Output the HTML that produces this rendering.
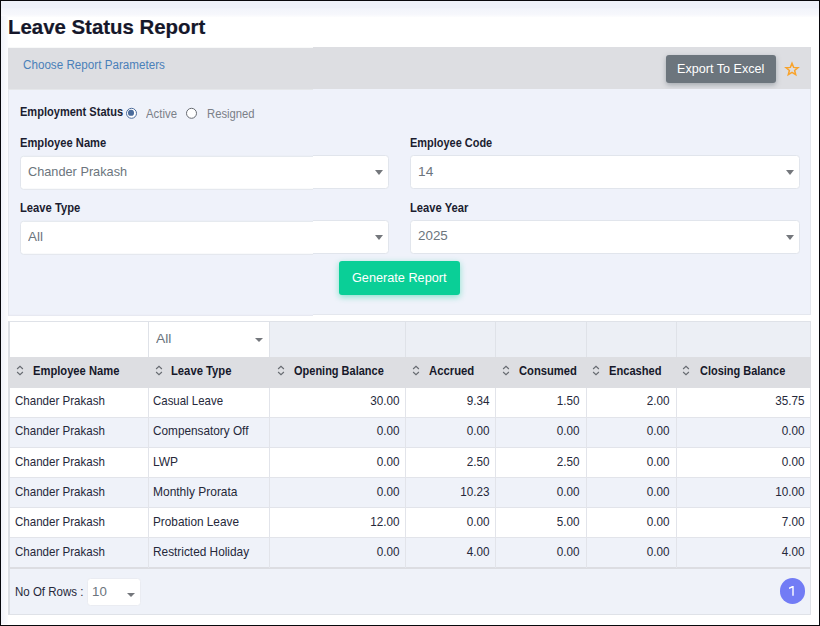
<!DOCTYPE html>
<html>
<head>
<meta charset="utf-8">
<title>Leave Status Report</title>
<style>*{box-sizing:border-box;margin:0;padding:0}
html,body{width:820px;height:626px;overflow:hidden;background:#fff}
body{font-family:"Liberation Sans",sans-serif;font-size:13px;color:#1b1d30;position:relative}
.abs{position:absolute}
.t{position:absolute;white-space:nowrap;line-height:1;transform-origin:0 0;font-weight:normal;font-family:"Liberation Sans",sans-serif}
.frame{position:absolute;left:0;top:0;width:820px;height:626px;border-style:solid;border-color:#08080c;border-width:1px 1px 1px 1px;z-index:50}
.frame:after{content:"";position:absolute;left:-1px;top:-1px;width:820px;height:626px;border-style:solid;border-color:rgba(8,8,12,.45);border-width:0 2px 2px 0}
.topband{position:absolute;left:1px;top:1px;width:818px;height:16px;background:linear-gradient(#eef1f9 0,#eef1f9 42%,#f3f5fb 50%,#f6f7fc 82%,#fdfdfe 100%)}
.leftband{position:absolute;left:1px;top:16px;width:7px;height:608px;background:linear-gradient(90deg,#f1f3fa,#fcfcfe)}
.up{position:absolute;left:0;width:820px;height:318px;overflow:hidden}
#upR{top:0;clip-path:inset(0 0 0 313px)}
#upL{clip-path:inset(0 507px 0 0)}
.bar{position:absolute;left:8.4px;top:47.2px;width:802.3px;height:41.6px;background:#dddee2}
.btn-ex{position:absolute;left:666.1px;top:54.8px;width:110.4px;height:28.3px;border-radius:3px;background:#6c757d;box-shadow:0 2px 5px rgba(108,117,125,.5)}
.panel{position:absolute;left:8.4px;top:88.8px;width:802.3px;height:226px;background:#eff2fa;border:1px solid #e4e7ee;border-top:none}
.radio{position:absolute;width:11.2px;height:11.2px;border-radius:50%;border:1.1px solid #676b72;background:#fff}
.radio.on{border-color:#4c6c9c}
.radio.on:after{content:"";position:absolute;left:1.6px;top:1.6px;width:5.8px;height:5.8px;border-radius:50%;background:#4a6b9b}
.sel{position:absolute;height:34px;background:#fff;border:1px solid #e1e5ec;border-radius:3.5px}
.sel:after{content:"";position:absolute;right:16px;top:13.6px;margin-right:-11.2px;border-left:4.9px solid transparent;border-right:4.9px solid transparent;border-top:5.1px solid #74777c}
.sel.sm:after{display:none}
.arrow{position:absolute;width:0;height:0;border-left:4.5px solid transparent;border-right:4.5px solid transparent;border-top:4.6px solid #74777c}
.btn-gen{position:absolute;left:339px;top:261.3px;width:121.1px;height:33.6px;border-radius:3px;background:#0acf97;box-shadow:0 2px 6px rgba(10,207,151,.45)}
.tbl{position:absolute;left:8px;top:321px;width:803px;height:293.6px;background:#eff2f9;border:1px solid #dfe2e8;border-left:2px solid #dcdfe5}
.pg{position:absolute;left:779.7px;top:578.2px;width:25.3px;height:25.5px;border-radius:50%;background:#727cf5}

#upL{top:0;transform:translateY(0.8px)}
</style>
</head>
<body>
<div class="topband"></div>
<div class="leftband"></div>
<div class="up" id="upR">
<span class="t" style="left:7.97px;top:16.00px;font-size:20.5px;transform:scaleX(0.9948);color:#15172a;font-weight:bold;-webkit-text-stroke:0.2px #15172a;">Leave Status Report</span>
<div class="bar"></div>
<span class="t" style="left:22.85px;top:58.00px;font-size:12.5px;transform:scaleX(0.9326);color:#4a80b9;">Choose Report Parameters</span>
<div class="btn-ex"></div>
<span class="t" style="left:677.45px;top:62.00px;font-size:13.7px;transform:scaleX(0.9206);color:#fff;">Export To Excel</span>
<svg class="abs" style="left:782.9px;top:60.2px" width="18" height="18" viewBox="0 0 18 18"><path d="M9.00 3.30 L10.62 7.38 L14.99 7.65 L11.62 10.45 L12.70 14.70 L9.00 12.35 L5.30 14.70 L6.38 10.45 L3.01 7.65 L7.38 7.38 Z" fill="none" stroke="#f9a32a" stroke-width="1.5" stroke-linejoin="miter"/></svg>
<div class="panel"></div>
<span class="t" style="left:20.16px;top:105.00px;font-size:12.4px;transform:scaleX(0.8916);color:#1b1d30;font-weight:bold;">Employment Status</span>
<div class="radio on" style="left:125.8px;top:106.8px"></div>
<span class="t" style="left:145.97px;top:108.00px;font-size:11.9px;transform:scaleX(0.9562);color:#7b8088;">Active</span>
<div class="radio" style="left:186px;top:107px"></div>
<span class="t" style="left:206.79px;top:108.00px;font-size:11.9px;transform:scaleX(0.9482);color:#7b8088;">Resigned</span>
<span class="t" style="left:20.14px;top:136.00px;font-size:12.4px;transform:scaleX(0.9006);color:#1b1d30;font-weight:bold;">Employee Name</span>
<span class="t" style="left:410.22px;top:137.00px;font-size:12.4px;transform:scaleX(0.8839);color:#1b1d30;font-weight:bold;">Employee Code</span>
<span class="t" style="left:20.10px;top:201.00px;font-size:12.4px;transform:scaleX(0.9053);color:#1b1d30;font-weight:bold;">Leave Type</span>
<span class="t" style="left:410.14px;top:202.00px;font-size:12.4px;transform:scaleX(0.9034);color:#1b1d30;font-weight:bold;">Leave Year</span>
<div class="sel" style="left:20px;top:155px;width:368.5px"></div>
<div class="sel" style="left:410.3px;top:155px;width:389.5px"></div>
<div class="sel" style="left:20px;top:220px;width:368.5px"></div>
<div class="sel" style="left:410.3px;top:220px;width:389.5px"></div>
<span class="t" style="left:28.02px;top:164.00px;font-size:13.6px;transform:scaleX(0.9368);color:#6c757d;">Chander Prakash</span>
<span class="t" style="left:418.34px;top:165.00px;font-size:13.6px;transform:scaleX(1.0092);color:#6c757d;">14</span>
<span class="t" style="left:28.07px;top:229.00px;font-size:13.6px;transform:scaleX(0.9899);color:#6c757d;">All</span>
<span class="t" style="left:418.11px;top:229.00px;font-size:13.6px;transform:scaleX(0.9851);color:#6c757d;">2025</span>
<div class="btn-gen"></div>
<span class="t" style="left:351.74px;top:271.00px;font-size:13.7px;transform:scaleX(0.9273);color:#fff;">Generate Report</span>
</div>
<div class="up" id="upL">
<span class="t" style="left:7.97px;top:16.00px;font-size:20.5px;transform:scaleX(0.9948);color:#15172a;font-weight:bold;-webkit-text-stroke:0.2px #15172a;">Leave Status Report</span>
<div class="bar"></div>
<span class="t" style="left:22.85px;top:58.00px;font-size:12.5px;transform:scaleX(0.9326);color:#4a80b9;">Choose Report Parameters</span>
<div class="btn-ex"></div>
<span class="t" style="left:677.45px;top:62.00px;font-size:13.7px;transform:scaleX(0.9206);color:#fff;">Export To Excel</span>
<svg class="abs" style="left:782.9px;top:60.2px" width="18" height="18" viewBox="0 0 18 18"><path d="M9.00 3.30 L10.62 7.38 L14.99 7.65 L11.62 10.45 L12.70 14.70 L9.00 12.35 L5.30 14.70 L6.38 10.45 L3.01 7.65 L7.38 7.38 Z" fill="none" stroke="#f9a32a" stroke-width="1.5" stroke-linejoin="miter"/></svg>
<div class="panel"></div>
<span class="t" style="left:20.16px;top:105.00px;font-size:12.4px;transform:scaleX(0.8916);color:#1b1d30;font-weight:bold;">Employment Status</span>
<div class="radio on" style="left:125.8px;top:106.8px"></div>
<span class="t" style="left:145.97px;top:108.00px;font-size:11.9px;transform:scaleX(0.9562);color:#7b8088;">Active</span>
<div class="radio" style="left:186px;top:107px"></div>
<span class="t" style="left:206.79px;top:108.00px;font-size:11.9px;transform:scaleX(0.9482);color:#7b8088;">Resigned</span>
<span class="t" style="left:20.14px;top:136.00px;font-size:12.4px;transform:scaleX(0.9006);color:#1b1d30;font-weight:bold;">Employee Name</span>
<span class="t" style="left:410.22px;top:137.00px;font-size:12.4px;transform:scaleX(0.8839);color:#1b1d30;font-weight:bold;">Employee Code</span>
<span class="t" style="left:20.10px;top:201.00px;font-size:12.4px;transform:scaleX(0.9053);color:#1b1d30;font-weight:bold;">Leave Type</span>
<span class="t" style="left:410.14px;top:202.00px;font-size:12.4px;transform:scaleX(0.9034);color:#1b1d30;font-weight:bold;">Leave Year</span>
<div class="sel" style="left:20px;top:155px;width:368.5px"></div>
<div class="sel" style="left:410.3px;top:155px;width:389.5px"></div>
<div class="sel" style="left:20px;top:220px;width:368.5px"></div>
<div class="sel" style="left:410.3px;top:220px;width:389.5px"></div>
<span class="t" style="left:28.02px;top:164.00px;font-size:13.6px;transform:scaleX(0.9368);color:#6c757d;">Chander Prakash</span>
<span class="t" style="left:418.34px;top:165.00px;font-size:13.6px;transform:scaleX(1.0092);color:#6c757d;">14</span>
<span class="t" style="left:28.07px;top:229.00px;font-size:13.6px;transform:scaleX(0.9899);color:#6c757d;">All</span>
<span class="t" style="left:418.11px;top:229.00px;font-size:13.6px;transform:scaleX(0.9851);color:#6c757d;">2025</span>
<div class="btn-gen"></div>
<span class="t" style="left:351.74px;top:271.00px;font-size:13.7px;transform:scaleX(0.9273);color:#fff;">Generate Report</span>
</div>
<div class="tbl"></div>
<div class="abs" style="left:10px;top:322px;width:259px;height:35px;background:#fff"></div>
<div class="abs" style="left:269px;top:322px;width:541px;height:35px;background:#eceff5"></div>
<div class="abs" style="left:8px;top:357px;width:803px;height:30.5px;background:#dddee2"></div>
<div class="abs" style="left:10px;top:387.5px;width:800px;height:30px;background:#fff"></div>
<div class="abs" style="left:10px;top:417px;width:800px;height:1px;background:#e2e4ea"></div>
<div class="abs" style="left:10px;top:417.5px;width:800px;height:30px;background:#eff2f9"></div>
<div class="abs" style="left:10px;top:447px;width:800px;height:1px;background:#e2e4ea"></div>
<div class="abs" style="left:10px;top:447.5px;width:800px;height:30px;background:#fff"></div>
<div class="abs" style="left:10px;top:477px;width:800px;height:1px;background:#e2e4ea"></div>
<div class="abs" style="left:10px;top:477.5px;width:800px;height:30px;background:#eff2f9"></div>
<div class="abs" style="left:10px;top:507px;width:800px;height:1px;background:#e2e4ea"></div>
<div class="abs" style="left:10px;top:507.5px;width:800px;height:30px;background:#fff"></div>
<div class="abs" style="left:10px;top:537px;width:800px;height:1px;background:#e2e4ea"></div>
<div class="abs" style="left:10px;top:537.5px;width:800px;height:30px;background:#eff2f9"></div>
<div class="abs" style="left:10px;top:567px;width:800px;height:1.6px;background:#dcdde2"></div>
<div class="abs" style="left:148px;top:322px;width:1px;height:35px;background:#dfe2e8"></div>
<div class="abs" style="left:148px;top:387.5px;width:1px;height:180px;background:#e2e4ea"></div>
<div class="abs" style="left:269px;top:322px;width:1px;height:35px;background:#dfe2e8"></div>
<div class="abs" style="left:269px;top:387.5px;width:1px;height:180px;background:#e2e4ea"></div>
<div class="abs" style="left:405px;top:322px;width:1px;height:35px;background:#dfe2e8"></div>
<div class="abs" style="left:405px;top:387.5px;width:1px;height:180px;background:#e2e4ea"></div>
<div class="abs" style="left:495px;top:322px;width:1px;height:35px;background:#dfe2e8"></div>
<div class="abs" style="left:495px;top:387.5px;width:1px;height:180px;background:#e2e4ea"></div>
<div class="abs" style="left:586px;top:322px;width:1px;height:35px;background:#dfe2e8"></div>
<div class="abs" style="left:586px;top:387.5px;width:1px;height:180px;background:#e2e4ea"></div>
<div class="abs" style="left:676px;top:322px;width:1px;height:35px;background:#dfe2e8"></div>
<div class="abs" style="left:676px;top:387.5px;width:1px;height:180px;background:#e2e4ea"></div>
<svg class="abs" style="left:15.65px;top:365.3px" width="8" height="11" viewBox="0 0 8 11"><path d="M1.1 4 L4 1.3 L6.9 4 M1.1 7 L4 9.7 L6.9 7" fill="none" stroke="#666a70" stroke-width="1.1"/></svg>
<span class="t" style="left:33.07px;top:365.00px;font-size:12px;transform:scaleX(0.9315);color:#16182a;font-weight:bold;">Employee Name</span>
<svg class="abs" style="left:154.95px;top:365.3px" width="8" height="11" viewBox="0 0 8 11"><path d="M1.1 4 L4 1.3 L6.9 4 M1.1 7 L4 9.7 L6.9 7" fill="none" stroke="#666a70" stroke-width="1.1"/></svg>
<span class="t" style="left:171.15px;top:365.00px;font-size:12px;transform:scaleX(0.9371);color:#16182a;font-weight:bold;">Leave Type</span>
<svg class="abs" style="left:276.75px;top:365.3px" width="8" height="11" viewBox="0 0 8 11"><path d="M1.1 4 L4 1.3 L6.9 4 M1.1 7 L4 9.7 L6.9 7" fill="none" stroke="#666a70" stroke-width="1.1"/></svg>
<span class="t" style="left:293.81px;top:365.00px;font-size:12px;transform:scaleX(0.9159);color:#16182a;font-weight:bold;">Opening Balance</span>
<svg class="abs" style="left:411.85px;top:365.3px" width="8" height="11" viewBox="0 0 8 11"><path d="M1.1 4 L4 1.3 L6.9 4 M1.1 7 L4 9.7 L6.9 7" fill="none" stroke="#666a70" stroke-width="1.1"/></svg>
<span class="t" style="left:428.50px;top:365.00px;font-size:12px;transform:scaleX(0.9422);color:#16182a;font-weight:bold;">Accrued</span>
<svg class="abs" style="left:501.95px;top:365.3px" width="8" height="11" viewBox="0 0 8 11"><path d="M1.1 4 L4 1.3 L6.9 4 M1.1 7 L4 9.7 L6.9 7" fill="none" stroke="#666a70" stroke-width="1.1"/></svg>
<span class="t" style="left:518.95px;top:365.00px;font-size:12px;transform:scaleX(0.9334);color:#16182a;font-weight:bold;">Consumed</span>
<svg class="abs" style="left:592.15px;top:365.3px" width="8" height="11" viewBox="0 0 8 11"><path d="M1.1 4 L4 1.3 L6.9 4 M1.1 7 L4 9.7 L6.9 7" fill="none" stroke="#666a70" stroke-width="1.1"/></svg>
<span class="t" style="left:609.19px;top:365.00px;font-size:12px;transform:scaleX(0.9279);color:#16182a;font-weight:bold;">Encashed</span>
<svg class="abs" style="left:681.95px;top:365.3px" width="8" height="11" viewBox="0 0 8 11"><path d="M1.1 4 L4 1.3 L6.9 4 M1.1 7 L4 9.7 L6.9 7" fill="none" stroke="#666a70" stroke-width="1.1"/></svg>
<span class="t" style="left:699.91px;top:365.00px;font-size:12px;transform:scaleX(0.9130);color:#16182a;font-weight:bold;">Closing Balance</span>
<span class="t" style="left:15.37px;top:395.00px;font-size:12.6px;transform:scaleX(0.9173);color:#25283a;">Chander Prakash</span>
<span class="t" style="left:153.40px;top:395.00px;font-size:12.6px;transform:scaleX(0.9094);color:#25283a;">Casual Leave</span>
<span class="t" style="right:420.70px;top:395.00px;font-size:12.6px;transform-origin:100% 0;transform:scaleX(0.93);color:#25283a">30.00</span>
<span class="t" style="right:330.60px;top:395.00px;font-size:12.6px;transform-origin:100% 0;transform:scaleX(0.93);color:#25283a">9.34</span>
<span class="t" style="right:240.80px;top:395.00px;font-size:12.6px;transform-origin:100% 0;transform:scaleX(0.93);color:#25283a">1.50</span>
<span class="t" style="right:150.50px;top:395.00px;font-size:12.6px;transform-origin:100% 0;transform:scaleX(0.93);color:#25283a">2.00</span>
<span class="t" style="right:15.00px;top:395.00px;font-size:12.6px;transform-origin:100% 0;transform:scaleX(0.93);color:#25283a">35.75</span>
<span class="t" style="left:15.37px;top:425.00px;font-size:12.6px;transform:scaleX(0.9173);color:#25283a;">Chander Prakash</span>
<span class="t" style="left:153.40px;top:425.00px;font-size:12.6px;transform:scaleX(0.9357);color:#25283a;">Compensatory Off</span>
<span class="t" style="right:420.70px;top:425.00px;font-size:12.6px;transform-origin:100% 0;transform:scaleX(0.93);color:#25283a">0.00</span>
<span class="t" style="right:330.60px;top:425.00px;font-size:12.6px;transform-origin:100% 0;transform:scaleX(0.93);color:#25283a">0.00</span>
<span class="t" style="right:240.80px;top:425.00px;font-size:12.6px;transform-origin:100% 0;transform:scaleX(0.93);color:#25283a">0.00</span>
<span class="t" style="right:150.50px;top:425.00px;font-size:12.6px;transform-origin:100% 0;transform:scaleX(0.93);color:#25283a">0.00</span>
<span class="t" style="right:15.00px;top:425.00px;font-size:12.6px;transform-origin:100% 0;transform:scaleX(0.93);color:#25283a">0.00</span>
<span class="t" style="left:15.37px;top:456.00px;font-size:12.6px;transform:scaleX(0.9173);color:#25283a;">Chander Prakash</span>
<span class="t" style="left:153.40px;top:456.00px;font-size:12.6px;transform:scaleX(0.9530);color:#25283a;">LWP</span>
<span class="t" style="right:420.70px;top:456.00px;font-size:12.6px;transform-origin:100% 0;transform:scaleX(0.93);color:#25283a">0.00</span>
<span class="t" style="right:330.60px;top:456.00px;font-size:12.6px;transform-origin:100% 0;transform:scaleX(0.93);color:#25283a">2.50</span>
<span class="t" style="right:240.80px;top:456.00px;font-size:12.6px;transform-origin:100% 0;transform:scaleX(0.93);color:#25283a">2.50</span>
<span class="t" style="right:150.50px;top:456.00px;font-size:12.6px;transform-origin:100% 0;transform:scaleX(0.93);color:#25283a">0.00</span>
<span class="t" style="right:15.00px;top:456.00px;font-size:12.6px;transform-origin:100% 0;transform:scaleX(0.93);color:#25283a">0.00</span>
<span class="t" style="left:15.37px;top:486.00px;font-size:12.6px;transform:scaleX(0.9173);color:#25283a;">Chander Prakash</span>
<span class="t" style="left:153.40px;top:486.00px;font-size:12.6px;transform:scaleX(0.9507);color:#25283a;">Monthly Prorata</span>
<span class="t" style="right:420.70px;top:486.00px;font-size:12.6px;transform-origin:100% 0;transform:scaleX(0.93);color:#25283a">0.00</span>
<span class="t" style="right:330.60px;top:486.00px;font-size:12.6px;transform-origin:100% 0;transform:scaleX(0.93);color:#25283a">10.23</span>
<span class="t" style="right:240.80px;top:486.00px;font-size:12.6px;transform-origin:100% 0;transform:scaleX(0.93);color:#25283a">0.00</span>
<span class="t" style="right:150.50px;top:486.00px;font-size:12.6px;transform-origin:100% 0;transform:scaleX(0.93);color:#25283a">0.00</span>
<span class="t" style="right:15.00px;top:486.00px;font-size:12.6px;transform-origin:100% 0;transform:scaleX(0.93);color:#25283a">10.00</span>
<span class="t" style="left:15.37px;top:516.00px;font-size:12.6px;transform:scaleX(0.9173);color:#25283a;">Chander Prakash</span>
<span class="t" style="left:153.40px;top:516.00px;font-size:12.6px;transform:scaleX(0.9370);color:#25283a;">Probation Leave</span>
<span class="t" style="right:420.70px;top:516.00px;font-size:12.6px;transform-origin:100% 0;transform:scaleX(0.93);color:#25283a">12.00</span>
<span class="t" style="right:330.60px;top:516.00px;font-size:12.6px;transform-origin:100% 0;transform:scaleX(0.93);color:#25283a">0.00</span>
<span class="t" style="right:240.80px;top:516.00px;font-size:12.6px;transform-origin:100% 0;transform:scaleX(0.93);color:#25283a">5.00</span>
<span class="t" style="right:150.50px;top:516.00px;font-size:12.6px;transform-origin:100% 0;transform:scaleX(0.93);color:#25283a">0.00</span>
<span class="t" style="right:15.00px;top:516.00px;font-size:12.6px;transform-origin:100% 0;transform:scaleX(0.93);color:#25283a">7.00</span>
<span class="t" style="left:15.37px;top:546.00px;font-size:12.6px;transform:scaleX(0.9173);color:#25283a;">Chander Prakash</span>
<span class="t" style="left:153.40px;top:546.00px;font-size:12.6px;transform:scaleX(0.9404);color:#25283a;">Restricted Holiday</span>
<span class="t" style="right:420.70px;top:546.00px;font-size:12.6px;transform-origin:100% 0;transform:scaleX(0.93);color:#25283a">0.00</span>
<span class="t" style="right:330.60px;top:546.00px;font-size:12.6px;transform-origin:100% 0;transform:scaleX(0.93);color:#25283a">4.00</span>
<span class="t" style="right:240.80px;top:546.00px;font-size:12.6px;transform-origin:100% 0;transform:scaleX(0.93);color:#25283a">0.00</span>
<span class="t" style="right:150.50px;top:546.00px;font-size:12.6px;transform-origin:100% 0;transform:scaleX(0.93);color:#25283a">0.00</span>
<span class="t" style="right:15.00px;top:546.00px;font-size:12.6px;transform-origin:100% 0;transform:scaleX(0.93);color:#25283a">4.00</span>
<span class="t" style="left:155.99px;top:332.00px;font-size:13.5px;transform:scaleX(1.0275);color:#6c757d;">All</span>
<div class="arrow" style="left:254.5px;top:337.6px"></div>
<span class="t" style="left:14.52px;top:586.00px;font-size:12.6px;transform:scaleX(0.9136);color:#25283a;">No Of Rows :</span>
<div class="sel sm" style="left:87px;top:578px;width:54px;height:28px;border-color:#eaecf2"></div>
<span class="t" style="left:91.59px;top:585.00px;font-size:13.5px;transform:scaleX(0.9827);color:#6c757d;">10</span>
<div class="arrow" style="left:126.6px;top:592.8px"></div>
<div class="pg"></div>
<svg class="abs" style="left:786px;top:584px" width="12" height="14" viewBox="0 0 12 14"><path d="M6.2 2 L7.7 2 L7.7 11.7 L6.3 11.7 L6.3 3.75 L3 4.95 L3 3.6 Z" fill="#fff"/></svg>
<div class="frame"></div>
</body>
</html>
